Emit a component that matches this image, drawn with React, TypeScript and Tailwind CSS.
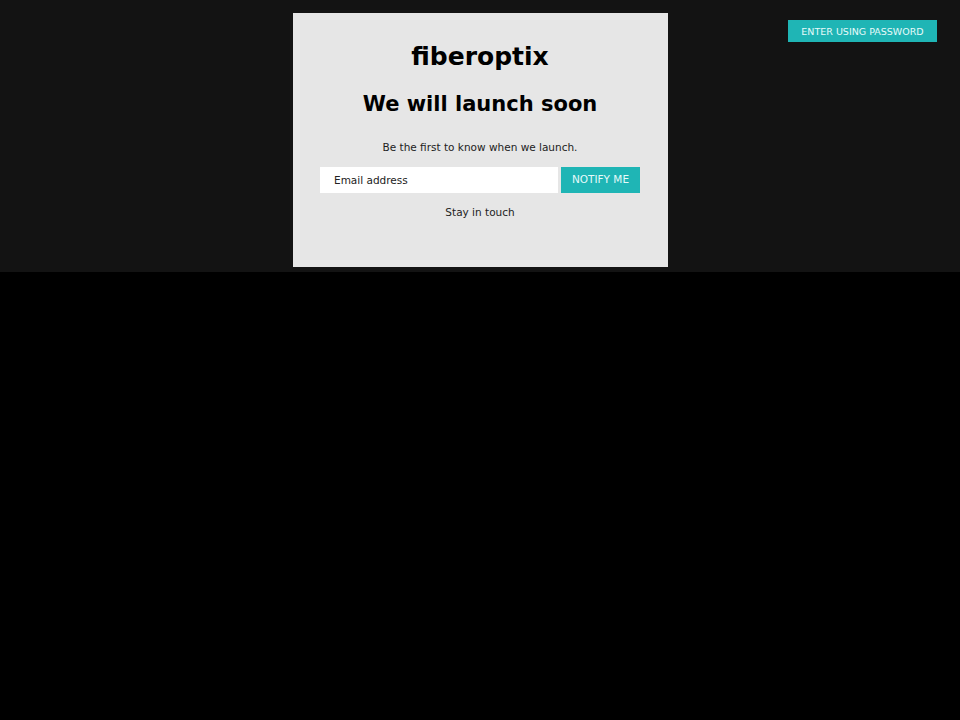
export default function App() {
  return (
    <div className="min-h-[720px] w-full bg-black font-['DejaVu_Sans',sans-serif]">
      <header className="relative h-[272px] bg-[#131313]">
        <div className="flex justify-center pt-[13px]">
          <div className="flex h-[254px] w-[375px] flex-col items-center bg-[#e6e6e6] pt-[29px] text-black">
            <h1 className="text-[25px] font-bold leading-[30px]">fiberoptix</h1>
            <h2 className="mt-[19px] text-[21px] font-bold leading-[26px]">We will launch soon</h2>
            <p className="mt-[23px] text-[10.5px] leading-[14px] text-[#222]">Be the first to know when we launch.</p>
            <form className="mt-[13px] flex gap-[3px]">
              <input
                type="email"
                placeholder="Email address"
                className="h-[26px] w-[238px] bg-white px-[14px] text-[10.5px] text-[#222] placeholder:text-[#222] outline-none"
              />
              <button type="button" className="h-[26px] w-[79px] bg-[#1fb5b5] text-[10.5px] text-[#e6fafa]">
                NOTIFY ME
              </button>
            </form>
            <p className="mt-[12px] text-[10.5px] leading-[14px] text-[#222]">Stay in touch</p>
          </div>
        </div>
        <button
          type="button"
          className="absolute right-[23px] top-[20px] h-[22px] w-[149px] bg-[#1fb5b5] pt-[2px] text-[9.5px] text-[#e6fafa]"
        >
          ENTER USING PASSWORD
        </button>
      </header>
    </div>
  );
}
